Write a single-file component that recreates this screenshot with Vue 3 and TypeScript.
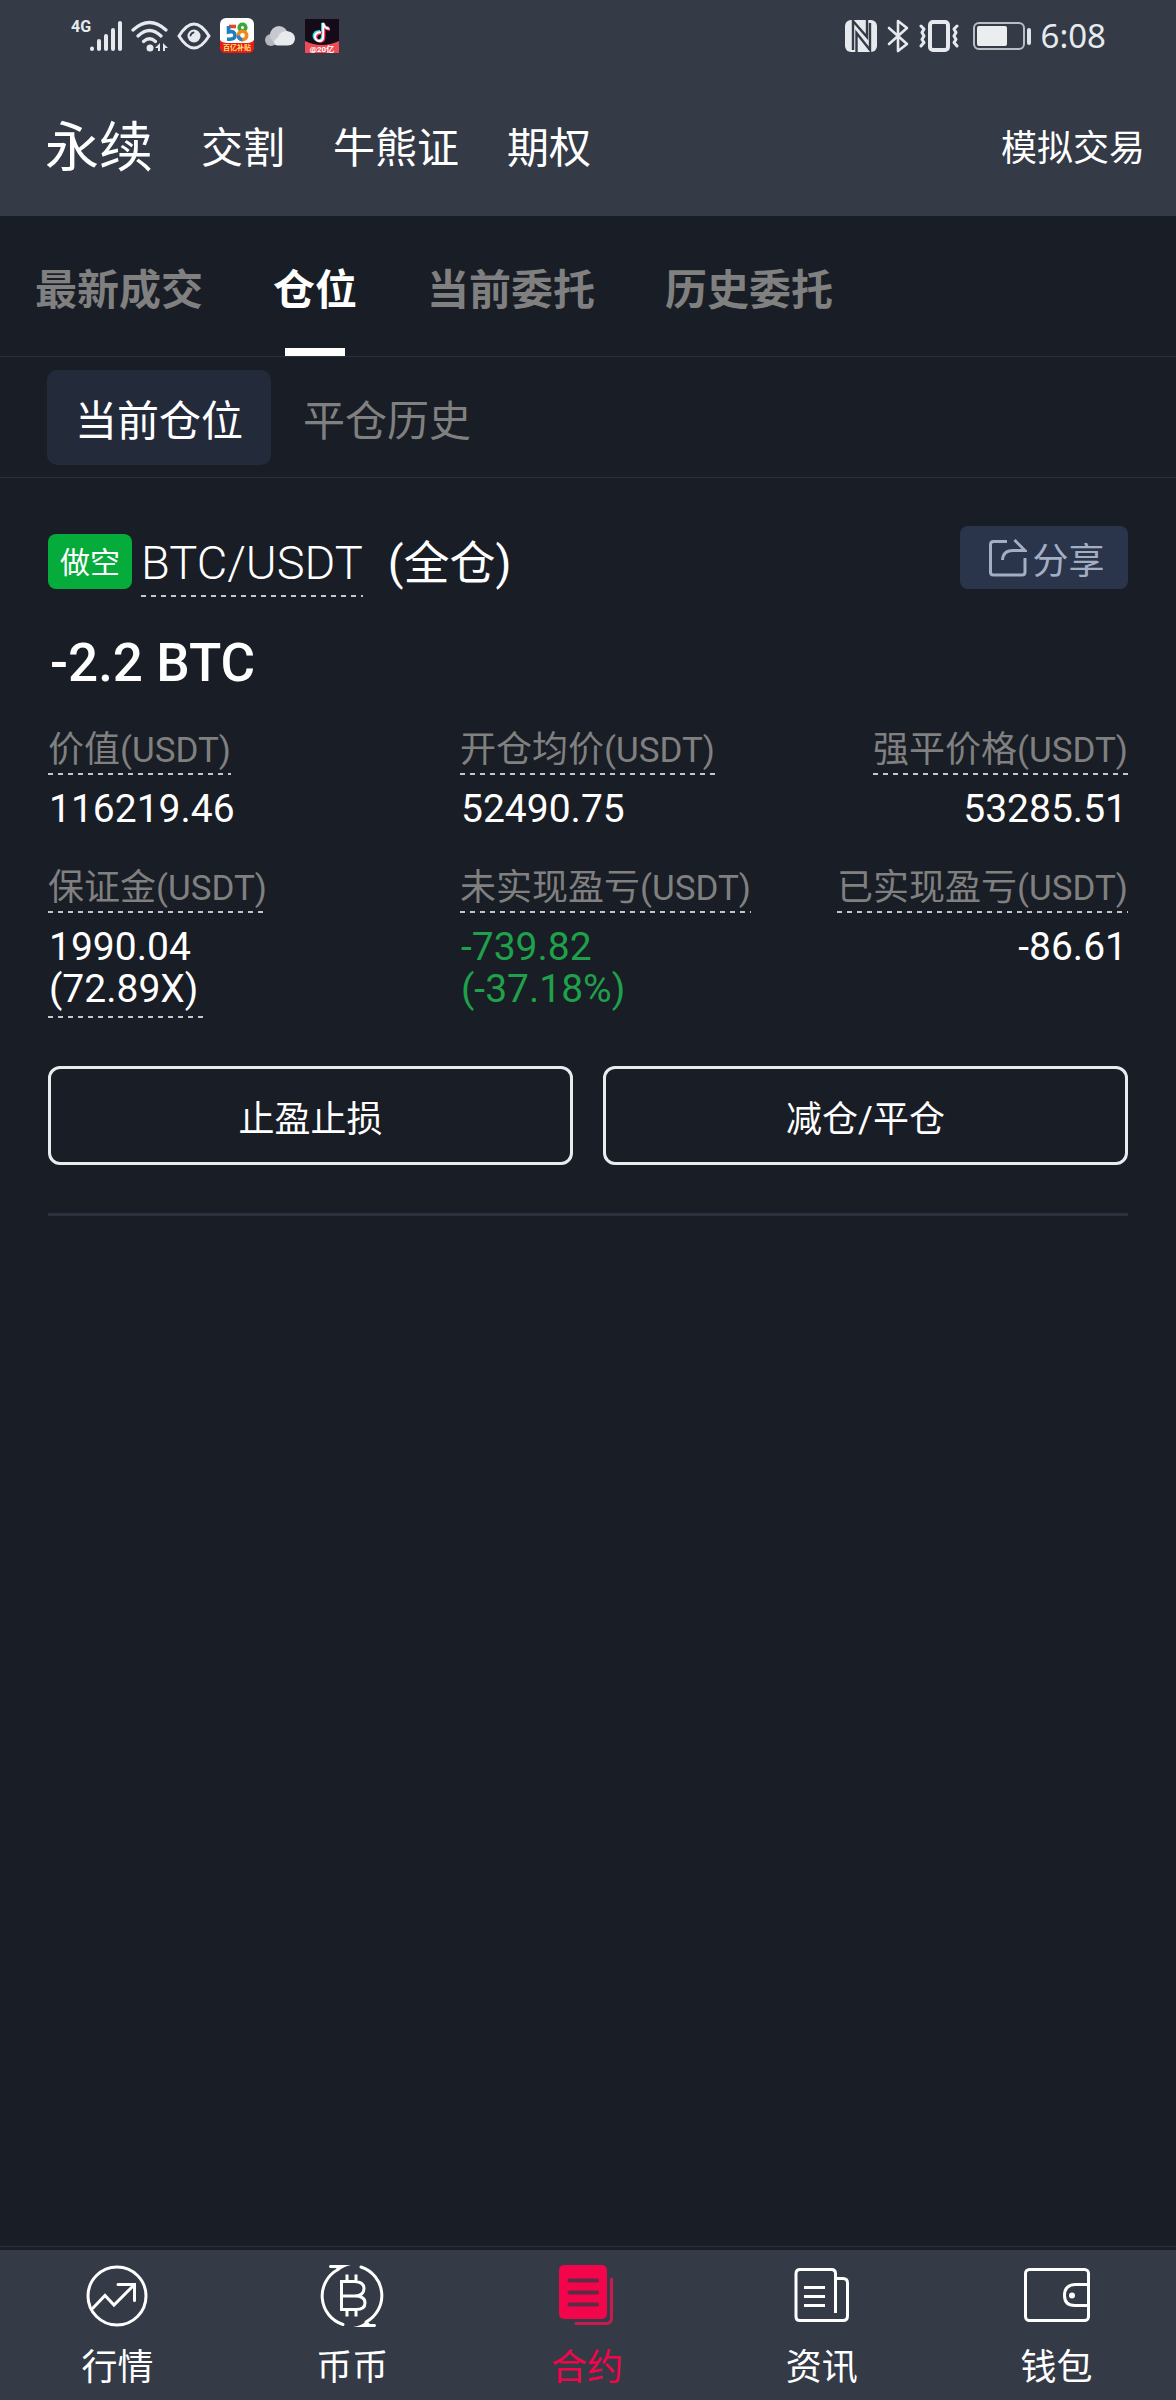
<script setup lang="ts">
import { ref } from 'vue'

interface Metric {
  label: string
  lines: string[]
  tone?: 'down'
  hint?: boolean
}

const products = ['永续', '交割', '牛熊证', '期权']
const product = ref('永续')

const tabs = ['最新成交', '仓位', '当前委托', '历史委托']
const tab = ref('仓位')

const views = ['当前仓位', '平仓历史']
const view = ref('当前仓位')

const metrics: Metric[] = [
  { label: '价值', lines: ['116219.46'] },
  { label: '开仓均价', lines: ['52490.75'] },
  { label: '强平价格', lines: ['53285.51'] },
  { label: '保证金', lines: ['1990.04', '(72.89X)'], hint: true },
  { label: '未实现盈亏', lines: ['-739.82', '(-37.18%)'], tone: 'down' },
  { label: '已实现盈亏', lines: ['-86.61'] },
]

const navItems = [
  { key: 'market', label: '行情' },
  { key: 'spot', label: '币币' },
  { key: 'contract', label: '合约' },
  { key: 'news', label: '资讯' },
  { key: 'wallet', label: '钱包' },
]
const current = ref('contract')
</script>

<template>
  <div class="app">
    <header class="top">
      <div class="status">
        <div class="status-left">
          <span class="net">4G</span>
          <svg class="bars" width="34" height="32" viewBox="0 0 34 32" fill="none" stroke="#e6eaee" stroke-width="4" stroke-linecap="round">
            <path d="M3 28.500v.5M10 21v8M17 16v13M24 10v19M31 3v26" />
          </svg>
          <svg class="wifi" width="38" height="32" viewBox="0 0 38 32">
            <g fill="none" stroke="#e6eaee" stroke-width="3.200" stroke-linecap="round">
              <path d="M2 10Q18.500-5 35 10M7 16Q18.500 5 30 16M12.500 21.500Q18.500 16 24.500 21.500" />
            </g>
            <circle cx="19" cy="28" r="3.500" fill="#e6eaee" />
            <path d="M29 23v8h-2v-3h-3zM32 31v-8l5 5h-3v3z" fill="#e6eaee" />
          </svg>
          <svg class="eye" width="34" height="28" viewBox="0 0 34 28">
            <path d="M2 14Q17-10 32 14Q17 38 2 14Z" fill="none" stroke="#e6eaee" stroke-width="3" />
            <circle cx="17" cy="14" r="6.500" fill="#e6eaee" />
            <path d="M13.500 13.500Q14 11 16.500 10.500" fill="none" stroke="#343a46" stroke-width="1.800" stroke-linecap="round" />
          </svg>
          <svg class="app58" width="36" height="36" viewBox="0 0 36 36">
            <rect x="1" y="0" width="34" height="34" rx="6" fill="#fff" />
            <path d="M1 22Q3 25 8 25H28Q33 25 35 22V29Q35 35 29 35H7Q1 35 1 29Z" fill="#e51c10" />
            <g fill="none" stroke-width="3.600">
              <path d="M17 8.500H10" stroke="#e8452e" />
              <path d="M9.500 8V14Q16 12.500 16 17.500Q16 22 8 21" stroke="#1d7fc0" />
              <circle cx="23.500" cy="9.500" r="3.300" stroke="#3aa83a" />
              <circle cx="23.500" cy="17.500" r="4.200" stroke="#f08a1c" />
              <path d="M19.300 17.500A4.200 4.200 0 0 0 23.500 21.700" stroke="#2f82c4" />
            </g>
            <text x="18" y="32" text-anchor="middle" class="tiny yellow">百亿补贴</text>
          </svg>
          <svg class="cloud" width="32" height="22" viewBox="0 0 32 22">
            <circle cx="7" cy="15" r="6" fill="#b4b8be" />
            <circle cx="15" cy="10" r="9" fill="#c6cad0" />
            <path d="M13 20.500Q10 20 10 16L14 12Q16 6 23 6Q31 7 31 14Q30 20.500 24 20.500Z" fill="#e8eaed" />
          </svg>
          <svg class="tiktok" width="34" height="34" viewBox="0 0 34 34">
            <rect width="34" height="34" fill="#150a18" />
            <g fill="none" stroke-width="2.800">
              <path d="M15 12.500Q9 12.500 9 17.500Q10 21.500 13.500 21.500Q17.500 21.500 17.500 17V4Q19 9 23.500 9" stroke="#2ee6e0" />
              <path d="M17 14Q11 14 11 18.500Q12 22.500 15 22.500Q19 22.500 19 18V5Q20 10 25 10.500" stroke="#f5325b" />
              <path d="M16 13.200Q10 13.200 10 18Q11 22 14.200 22Q18.200 22 18.200 17.500V4Q19.500 9.500 24.300 9.800" stroke="#fff" stroke-width="2" />
            </g>
            <path d="M0 22Q17 30 34 22V34H0Z" fill="#ee4b55" />
            <text x="17" y="33" text-anchor="middle" class="tiny">@20亿</text>
          </svg>
        </div>
        <div class="status-right">
          <svg class="nfc" width="32" height="32" viewBox="0 0 32 32">
            <rect width="32" height="32" rx="6" fill="#e6eaee" />
            <path d="M8 0V30M8 1L22 17V0M11.500 32V13L25 30V3" fill="none" stroke="#343a46" stroke-width="2.400" />
          </svg>
          <svg class="bt" width="22" height="34" viewBox="0 0 22 34" fill="none" stroke="#e6eaee" stroke-width="2.600" stroke-linecap="round" stroke-linejoin="round">
            <path d="M2 9L20 25L11 32V2L20 9L2 25" />
          </svg>
          <svg class="vib" width="40" height="32" viewBox="0 0 40 32" fill="none" stroke="#e6eaee" stroke-width="3" stroke-linecap="round" stroke-linejoin="round">
            <rect x="11" y="2" width="18" height="28" rx="3" stroke-width="4" />
            <path d="M2 6L5 9L3 12.500L5 16L3 19.500L5 22.500L2 26M38 6L35 9L37 12.500L35 16L37 19.500L35 22.500L38 26" />
          </svg>
          <svg class="batt" width="58" height="28" viewBox="0 0 58 28">
            <rect x="1" y="1" width="50" height="26" rx="5" fill="none" stroke="#b9bec5" stroke-width="2" />
            <rect x="4" y="4" width="30" height="20" rx="2" fill="#ebedef" />
            <rect x="54" y="6" width="4" height="17" rx="2" fill="#dfe3e6" />
          </svg>
          <time class="clock">6:08</time>
        </div>
      </div>
      <nav class="products">
        <button
          v-for="p in products"
          :key="p"
          type="button"
          class="product"
          :class="{ active: p === product }"
          @click="product = p"
        >{{ p }}</button>
        <a class="demo" href="#demo">模拟交易</a>
      </nav>
    </header>

    <main class="content">
      <nav class="tabs">
        <button
          v-for="t in tabs"
          :key="t"
          type="button"
          class="tab"
          :class="{ active: t === tab }"
          @click="tab = t"
        >{{ t }}</button>
      </nav>
      <nav class="views">
        <button
          v-for="v in views"
          :key="v"
          type="button"
          class="view"
          :class="{ active: v === view }"
          @click="view = v"
        >{{ v }}</button>
      </nav>

      <section class="position">
        <div class="heading">
          <span class="side">做空</span>
          <h2 class="pair dashed">BTC/USDT</h2>
          <span class="mode">(全仓)</span>
          <button type="button" class="share">
            <svg width="38" height="38" viewBox="0 0 38 38" fill="none" stroke="currentColor" stroke-width="3">
              <path d="M18 2.500H4.500Q1.500 2.500 1.500 5.500V33Q1.500 36 4.500 36H33Q36 36 36 33V19" />
              <path d="M25.500 1L36 11.500H24Q14 11.500 13.500 21" />
            </svg>
            <span>分享</span>
          </button>
        </div>
        <p class="amount">-2.2 BTC</p>
        <dl class="metrics">
          <div v-for="m in metrics" :key="m.label" class="metric">
            <dt class="dashed">{{ m.label }}<span class="unit">(USDT)</span></dt>
            <dd :class="[m.tone, { hint: m.hint }]">
              <span v-for="line in m.lines" :key="line" class="line">{{ line }}</span>
            </dd>
          </div>
        </dl>
        <div class="actions">
          <button type="button">止盈止损</button>
          <button type="button">减仓/平仓</button>
        </div>
      </section>
    </main>

    <nav class="bottom">
      <a
        v-for="n in navItems"
        :key="n.key"
        :href="'#' + n.key"
        class="item"
        :class="{ active: n.key === current }"
        @click="current = n.key"
      >
        <svg v-if="n.key === 'market'" width="66" height="62" viewBox="0 0 66 62" fill="none" stroke="currentColor" stroke-width="3" stroke-linecap="round">
          <circle cx="33" cy="31" r="29" />
          <path d="M9 43L21 30.500L30 40L50 20M34 19.500H50.500V35.500" />
        </svg>
        <svg v-else-if="n.key === 'spot'" width="66" height="62" viewBox="0 0 66 62" fill="none" stroke="currentColor" stroke-width="3">
          <path d="M24 59.500A30 30 0 0 1 19 4.500M42 2A30 30 0 0 1 47 57" stroke-linecap="round" />
          <path d="M11 0H32Q26 1 19 6L17 3H11Q9 1.500 11 0ZM56 62H34Q42 61 48 56L51 59H56Q58 60.500 56 62Z" fill="currentColor" stroke="none" />
          <path d="M22.500 16.500H36Q45 17 45 23.500Q45 30.500 36 31Q46 31 46 38Q46 44.500 37 44.500H22.500ZM22.500 31H36M28 9.500V16M37 9.500V16M28 45V51.500M37 45V51.500" />
        </svg>
        <svg v-else-if="n.key === 'contract'" width="66" height="62" viewBox="0 0 66 62" fill="none">
          <rect x="5" y="0" width="48" height="54" rx="5" fill="currentColor" />
          <path d="M15.500 15.500H43M15.500 27.500H43M15.500 39.500H43" stroke="#5e2b44" stroke-width="4" stroke-linecap="round" />
          <path d="M57.500 14V53Q57.500 58.500 52 58.500H22" stroke="#c81d4c" stroke-width="3" stroke-linecap="round" />
        </svg>
        <svg v-else-if="n.key === 'news'" width="66" height="62" viewBox="0 0 66 62" fill="none" stroke="currentColor" stroke-width="3">
          <path d="M46.500 48V8.500Q46.500 4.500 42.500 4.500H11Q7 4.500 7 8.500V51.500Q7 55.500 11 55.500H54Q58.500 55.500 58.500 51V18Q58.500 13.500 54 13.500H47" />
          <path d="M15 22.500H36M15 31.500H36M15 40.500H36" />
        </svg>
        <svg v-else width="68" height="62" viewBox="0 0 68 62" fill="none" stroke="currentColor" stroke-width="3">
          <rect x="2.500" y="4.500" width="63" height="51" rx="4" />
          <path d="M65 19.500H52Q41.500 20 41.500 30.500Q41.500 40.500 52 40.500H65" />
          <circle cx="49" cy="30.500" r="3" fill="currentColor" stroke="none" />
        </svg>
        <span>{{ n.label }}</span>
      </a>
    </nav>
  </div>
</template>

<style>
body {
  margin: 0;
  background: #191d25;
}
</style>

<style scoped>
.app {
  display: flex;
  flex-direction: column;
  min-height: 100vh;
  background: #191d25;
  color: #fff;
  font-family: Roboto, "Noto Sans CJK SC", sans-serif;
  font-size: 36px;
}

button {
  padding: 0;
  border: 0;
  background: none;
  color: inherit;
  font: inherit;
  cursor: pointer;
}

a {
  color: inherit;
  text-decoration: none;
}

svg {
  display: block;
  flex: none;
}

.top {
  background: #343a46;
}

.status {
  display: flex;
  justify-content: space-between;
  align-items: center;
  height: 72px;
  padding: 0 70px 0 71px;
}

.status-left,
.status-right {
  display: flex;
  align-items: center;
}

.net {
  align-self: flex-start;
  width: 18px;
  color: #e6eaee;
  font-size: 16px;
  font-weight: 700;
  line-height: 18px;
}

.wifi {
  margin-left: 8px;
}

.eye {
  margin-left: 8px;
}

.app58 {
  margin-left: 8px;
}

.cloud {
  margin-left: 9px;
}

.tiktok {
  margin-left: 9px;
}

.tiny {
  font-size: 8px;
  font-weight: 700;
  fill: #fff;
}

.yellow {
  fill: #ffe27a;
  font-size: 7px;
}

.bt {
  margin-left: 10px;
}

.vib {
  margin-left: 10px;
}

.batt {
  margin-left: 14px;
}

.clock {
  margin-left: 10px;
  color: #e6eaee;
  font-family: "Noto Sans", sans-serif;
  font-size: 33px;
  line-height: 40px;
}

.products {
  display: flex;
  align-items: center;
  gap: 48px;
  height: 134px;
  padding: 10px 31px 0 45px;
  line-height: 60px;
}

.product {
  font-size: 42px;
  line-height: 60px;
}

.product.active {
  font-size: 54px;
}

.demo {
  margin-left: auto;
}

.content {
  flex: 1;
  margin-bottom: 3px;
  border-bottom: 1px solid #2a303c;
}

.tabs {
  display: flex;
  gap: 70px;
  height: 140px;
  padding: 0 35px;
  border-bottom: 1px solid #2a303c;
}

.tab {
  position: relative;
  color: #808080;
  font-size: 42px;
  font-weight: 700;
}

.tab.active {
  color: #fff;
}

.tab.active::after {
  content: "";
  position: absolute;
  bottom: 0;
  left: 50%;
  width: 60px;
  height: 8px;
  margin-left: -30px;
  background: #fff;
}

.views {
  display: flex;
  align-items: center;
  gap: 4px;
  height: 120px;
  padding: 0 47px;
  border-bottom: 1px solid #2a303c;
}

.view {
  height: 95px;
  padding: 0 28px;
  border-radius: 10px;
  color: #808080;
  font-size: 42px;
}

.view.active {
  background: #232b3b;
  color: #fff;
}

.position {
  margin: 0 48px;
  padding: 48px 0;
  border-bottom: 3px solid #2a303c;
}

.dashed {
  background: repeating-linear-gradient(90deg, #c4c7ca 0 5px, transparent 5px 10px) bottom / 100% 2px no-repeat;
}

.heading {
  display: flex;
  align-items: flex-start;
}

.side {
  margin-top: 8px;
  padding: 3px 12px 0;
  border-radius: 8px;
  background: #05ab3b;
  font-size: 30px;
  line-height: 52px;
}

.pair {
  margin: 0 0 0 9px;
  padding: 10px 0 7px;
  font-size: 47px;
  font-weight: 300;
  line-height: 54px;
}

.mode {
  margin-left: 25px;
  padding-top: 10px;
  font-size: 46px;
  line-height: 54px;
}

.share {
  display: flex;
  justify-content: center;
  align-items: center;
  gap: 5px;
  width: 168px;
  height: 63px;
  margin-left: auto;
  padding-left: 6px;
  border-radius: 8px;
  background: #2a354b;
  color: #a3aec2;
}

.amount {
  margin: 36px 2px 34px;
  font-size: 53px;
  font-weight: 500;
  line-height: 60px;
}

.metrics {
  display: grid;
  grid-template-columns: 412fr 361fr 307fr;
  row-gap: 35px;
  margin: 0;
}

.metric:nth-child(3n) {
  text-align: right;
}

.metric dt {
  display: inline-block;
  padding-bottom: 1px;
  color: #808080;
  line-height: 46px;
  white-space: nowrap;
}

.unit {
  font-size: 35px;
}

.metric dd {
  margin: 13px 0 0;
  font-size: 39px;
  line-height: 42px;
}

.line {
  display: block;
  padding: 0 1px;
}

.hint .line:last-child {
  width: 154px;
  padding-bottom: 8px;
  background: repeating-linear-gradient(90deg, #c4c7ca 0 5px, transparent 5px 10px) bottom / 100% 2px no-repeat;
}

.down {
  color: #1fa04a;
}

.actions {
  display: grid;
  grid-template-columns: 1fr 1fr;
  gap: 30px;
  margin-top: 48px;
}

.actions button {
  height: 99px;
  border: 3px solid #e8ecee;
  border-radius: 12px;
}

.bottom {
  display: flex;
  height: 150px;
  padding-right: 2px;
  background: #343a46;
}

.item {
  display: flex;
  flex: 1;
  flex-direction: column;
  align-items: center;
  gap: 17px;
  padding-top: 15px;
  line-height: 48px;
}

.item.active {
  color: #f2054b;
}
</style>
